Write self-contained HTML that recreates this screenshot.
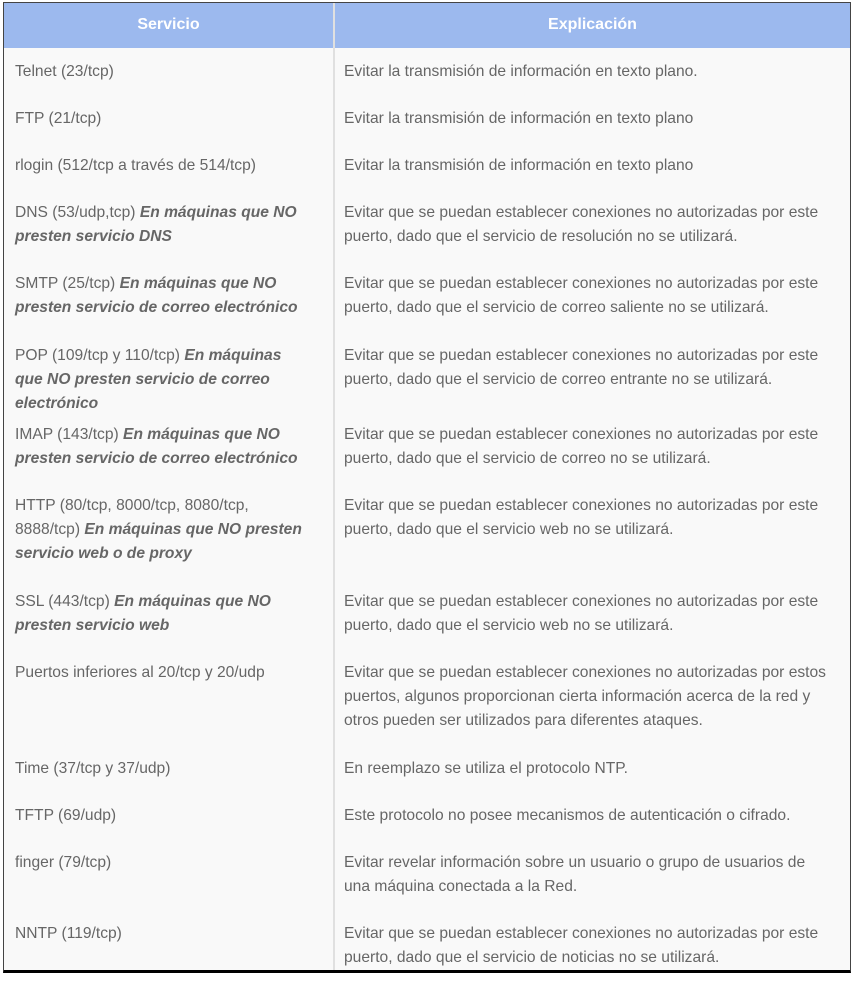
<!DOCTYPE html>
<html><head><meta charset="utf-8"><style>
body{margin:0;width:862px;height:989px;background:#fff;position:relative;overflow:hidden;font-family:"Liberation Sans",sans-serif;}
#t{position:absolute;left:3px;top:2px;width:846px;height:967px;background:#f9f9f9;border-left:1px solid #444;border-right:1px solid #444;border-top:1px solid #444;border-bottom:3px solid #000;}
#h{position:absolute;left:0;top:0;width:846px;height:45px;background:#9cb9ee;}
#h div{position:absolute;top:0;line-height:43px;color:#fff;font-weight:bold;font-size:16px;text-align:center;}
#d{position:absolute;left:329px;top:0;width:2px;height:967px;background:#e0e0e0;}
.c{position:absolute;font-size:15.6px;line-height:24px;color:#666;white-space:nowrap;}
.a{left:11px}
.b{left:340px}
i{font-weight:bold;}
</style></head><body>
<div id="t">
<div id="h"><div style="left:0;width:329px">Servicio</div><div style="left:331px;width:515px">Explicación</div></div>
<div id="d"></div>
<div class="c a" style="top:57px">Telnet (23/tcp)</div>
<div class="c b" style="top:57px">Evitar la transmisión de información en texto plano.</div>
<div class="c a" style="top:104px">FTP (21/tcp)</div>
<div class="c b" style="top:104px">Evitar la transmisión de información en texto plano</div>
<div class="c a" style="top:151px">rlogin (512/tcp a través de 514/tcp)</div>
<div class="c b" style="top:151px">Evitar la transmisión de información en texto plano</div>
<div class="c a" style="top:198px">DNS (53/udp,tcp) <i>En máquinas que NO<br>presten servicio DNS</i></div>
<div class="c b" style="top:198px">Evitar que se puedan establecer conexiones no autorizadas por este<br>puerto, dado que el servicio de resolución no se utilizará.</div>
<div class="c a" style="top:269px">SMTP (25/tcp) <i>En máquinas que NO<br>presten servicio de correo electrónico</i></div>
<div class="c b" style="top:269px">Evitar que se puedan establecer conexiones no autorizadas por este<br>puerto, dado que el servicio de correo saliente no se utilizará.</div>
<div class="c a" style="top:341px">POP (109/tcp y 110/tcp) <i>En máquinas<br>que NO presten servicio de correo<br>electrónico</i></div>
<div class="c b" style="top:341px">Evitar que se puedan establecer conexiones no autorizadas por este<br>puerto, dado que el servicio de correo entrante no se utilizará.</div>
<div class="c a" style="top:420px">IMAP (143/tcp) <i>En máquinas que NO<br>presten servicio de correo electrónico</i></div>
<div class="c b" style="top:420px">Evitar que se puedan establecer conexiones no autorizadas por este<br>puerto, dado que el servicio de correo no se utilizará.</div>
<div class="c a" style="top:491px">HTTP (80/tcp, 8000/tcp, 8080/tcp,<br>8888/tcp) <i>En máquinas que NO presten<br>servicio web o de proxy</i></div>
<div class="c b" style="top:491px">Evitar que se puedan establecer conexiones no autorizadas por este<br>puerto, dado que el servicio web no se utilizará.</div>
<div class="c a" style="top:587px">SSL (443/tcp) <i>En máquinas que NO<br>presten servicio web</i></div>
<div class="c b" style="top:587px">Evitar que se puedan establecer conexiones no autorizadas por este<br>puerto, dado que el servicio web no se utilizará.</div>
<div class="c a" style="top:658px">Puertos inferiores al 20/tcp y 20/udp</div>
<div class="c b" style="top:658px">Evitar que se puedan establecer conexiones no autorizadas por estos<br>puertos, algunos proporcionan cierta información acerca de la red y<br>otros pueden ser utilizados para diferentes ataques.</div>
<div class="c a" style="top:754px">Time (37/tcp y 37/udp)</div>
<div class="c b" style="top:754px">En reemplazo se utiliza el protocolo NTP.</div>
<div class="c a" style="top:801px">TFTP (69/udp)</div>
<div class="c b" style="top:801px">Este protocolo no posee mecanismos de autenticación o cifrado.</div>
<div class="c a" style="top:848px">finger (79/tcp)</div>
<div class="c b" style="top:848px">Evitar revelar información sobre un usuario o grupo de usuarios de<br>una máquina conectada a la Red.</div>
<div class="c a" style="top:919px">NNTP (119/tcp)</div>
<div class="c b" style="top:919px">Evitar que se puedan establecer conexiones no autorizadas por este<br>puerto, dado que el servicio de noticias no se utilizará.</div>
</div>
</body></html>
